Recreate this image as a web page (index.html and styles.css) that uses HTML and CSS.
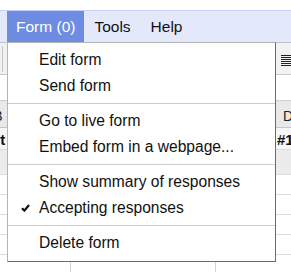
FILE: index.html
```html
<!DOCTYPE html>
<html lang="en">
<head>
  <meta charset="UTF-8" />
  <title>Form menu</title>
  <link rel="stylesheet" href="styles.css">
</head>
<body>
  <div class="page">
    <div class="topstrip"></div>

    <!-- Menu bar -->
    <div class="menubar">
      <div class="mb-item active">Form (0)</div>
      <div class="mb-item">Tools</div>
      <div class="mb-item">Help</div>
    </div>

    <!-- Toolbar and formula bar behind the menu -->
    <div class="toolbar">
      <span class="tb-btn"></span>
      <svg class="tb-icon" width="11" height="11" viewBox="0 0 11 11">
        <path d="M0 0.5H11M0 2.5H11M0 4.5H11M0 6.5H11M0 8.5H11M0 10.5H11" stroke="#222" stroke-width="1"/>
      </svg>
    </div>
    <div class="formula"></div>

    <!-- Sheet grid -->
    <div class="sheet">
      <div class="row colhead">
        <div class="cell">B</div><div class="cell">C</div><div class="cell">D</div>
      </div>
      <div class="row frozen">
        <div class="cell b">Report</div><div class="cell"></div><div class="cell d">Item #1</div>
      </div>
      <div class="row shaded">
        <div class="cell"></div><div class="cell"></div><div class="cell"></div>
      </div>
      <div class="row"><div class="cell"></div><div class="cell"></div><div class="cell"></div></div>
      <div class="row"><div class="cell"></div><div class="cell"></div><div class="cell"></div></div>
      <div class="row"><div class="cell"></div><div class="cell"></div><div class="cell"></div></div>
      <div class="row"><div class="cell"></div><div class="cell"></div><div class="cell"></div></div>
      <div class="row"><div class="cell"></div><div class="cell"></div><div class="cell"></div></div>
    </div>

    <!-- Dropdown -->
    <div class="menu">
      <div class="menu-item"><span class="gutter"></span>Edit form</div>
      <div class="menu-item"><span class="gutter"></span>Send form</div>
      <div class="sep"></div>
      <div class="menu-item"><span class="gutter"></span>Go to live form</div>
      <div class="menu-item"><span class="gutter"></span>Embed form in a webpage...</div>
      <div class="sep"></div>
      <div class="menu-item"><span class="gutter"></span>Show summary of responses</div>
      <div class="menu-item">
        <span class="gutter">
          <svg width="9" height="8" viewBox="0 0 9 8">
            <path d="M1 4.2L3.4 6.6L8 1" fill="none" stroke="#111" stroke-width="2.2"/>
          </svg>
        </span>Accepting responses
      </div>
      <div class="sep"></div>
      <div class="menu-item"><span class="gutter"></span>Delete form</div>
    </div>
  </div>
</body>
</html>
```

FILE: styles.css
```css
* {
  box-sizing: border-box;
}

body {
  margin: 0;
  font-family: 'Liberation Sans', Arial, sans-serif;
  color: #111;
  background: #fff;
}

.page {
  position: relative;
  width: 291px;
  height: 272px;
  overflow: hidden;
}

.topstrip {
  height: 10px;
  background: #fff;
}

.menubar {
  display: flex;
  height: 33px;
  padding-left: 7px;
  background: #e4e8fb;
  border-top: 1px solid #c6d1f6;
  border-bottom: 1px solid #c2c4cc;
  font-size: 15.5px;
  line-height: 31px;
}

.mb-item {
  padding: 0 9px;
}

.mb-item + .mb-item {
  padding: 0 10px;
}

.mb-item.active {
  background: #6e8de2;
  color: #fff;
  height: 32px;
}

.toolbar {
  display: flex;
  justify-content: space-between;
  align-items: center;
  height: 32px;
  background: #f2f2f2;
  border-bottom: 1px solid #c9c9c9;
}

.tb-btn {
  width: 3px;
  height: 26px;
  border-right: 1px solid #c4c4c4;
}

.tb-icon {
  margin-top: 4px;
  margin-right: -1px;
}

.formula {
  height: 26px;
  background: #fff;
  border-bottom: 1px solid #cfcfcf;
}

.sheet {
  margin-left: -74px;
}

.row {
  display: flex;
  height: 20px;
  border-bottom: 1px solid #dcdcdc;
}

.cell {
  width: 145px;
  flex: none;
  border-right: 1px solid #d4d4d4;
  white-space: nowrap;
  overflow: hidden;
}

.colhead {
  height: 27px;
  background: #e9e9e9;
  border-bottom: 1px solid #c6c6c6;
  font-size: 14px;
  line-height: 30px;
  text-align: center;
  color: #222;
}

.frozen {
  height: 22px;
  background: #f6f6f6;
  font-size: 15px;
  font-weight: bold;
  line-height: 24px;
}

.frozen .b {
  padding-left: 31px;
}

.frozen .d {
  padding-left: 26px;
}

.shaded {
  height: 25px;
  background: #ececec;
}

/* dropdown */
.menu {
  position: absolute;
  top: 42px;
  left: 7px;
  width: 269px;
  padding: 4px 0 5px;
  background: #fff;
  border: 1px solid #b4b4b4;
  border-right-color: #6a6a6a;
  border-bottom-color: #6a6a6a;
  font-size: 15.6px;
}

.menu-item {
  display: flex;
  align-items: center;
  height: 26px;
  line-height: 26px;
  white-space: nowrap;
}

.gutter {
  display: flex;
  align-items: center;
  width: 31px;
  padding-left: 13px;
}

.sep {
  height: 1px;
  margin: 4px 0;
  background: #cdcdcd;
}
```
